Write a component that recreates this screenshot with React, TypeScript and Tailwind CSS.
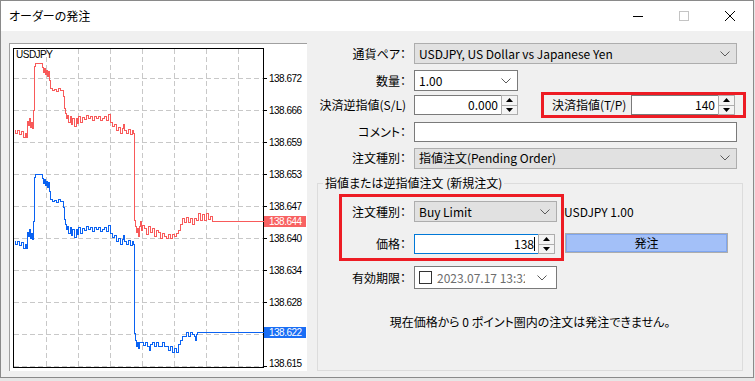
import React from 'react';

const redHead: [number, number][] = [
  [14, 130], [15, 133], [17, 130], [19, 134], [21, 131], [23, 137], [25, 133], [26, 137], [27, 121], [28, 125],
  [29, 118], [30, 127], [31, 122], [32, 128], [33, 110], [34, 66], [35, 63], [41, 63], [42, 67], [43, 72],
  [44, 68], [45, 74], [46, 70], [47, 76], [48, 71], [49, 80], [50, 88], [52, 90], [54, 89], [56, 91],
  [58, 88], [60, 90], [62, 90], [63, 96], [64, 108], [65, 113], [66, 118], [67, 115], [68, 122], [70, 116],
  [71, 124], [72, 118], [74, 126], [76, 118], [77, 123], [78, 116], [80, 122], [82, 117], [84, 119], [86, 115],
  [88, 118], [90, 116], [92, 120], [94, 116], [96, 118], [98, 116], [100, 120], [102, 118], [104, 116], [106, 120],
  [108, 114], [110, 122], [112, 126], [114, 124], [116, 130], [118, 127], [120, 133], [122, 128], [123, 124], [124, 130],
  [126, 133], [128, 129], [130, 134], [132, 130], [133, 133],
];

const redTail: [number, number][] = [
  [134, 220], [135, 226], [136, 232], [137, 228], [138, 236], [139, 226], [140, 221], [141, 230], [142, 225], [144, 228],
  [146, 234], [148, 226], [150, 232], [152, 228], [154, 236], [156, 230], [158, 232], [160, 238], [162, 233], [164, 236],
  [166, 238], [168, 234], [170, 238], [172, 234], [174, 236], [176, 233], [178, 230], [180, 224], [182, 218], [184, 222],
  [186, 217], [188, 222], [190, 218], [192, 224], [194, 218], [196, 220], [198, 213], [200, 220], [202, 214], [204, 220],
  [206, 213], [208, 219], [210, 216], [212, 221], [263, 221],
];

const blueTail: [number, number][] = [
  [134, 333], [135, 340], [136, 346], [137, 342], [138, 348], [139, 342], [141, 342], [143, 345], [145, 342], [147, 346],
  [149, 350], [150, 344], [152, 342], [154, 346], [156, 342], [158, 346], [160, 346], [162, 342], [164, 346], [166, 346],
  [168, 350], [170, 346], [172, 352], [174, 348], [176, 352], [178, 344], [180, 340], [182, 336], [185, 336], [186, 332],
  [188, 336], [190, 332], [192, 334], [194, 336], [195, 340], [196, 334], [197, 332], [263, 332],
];

const redLine = [...redHead, ...redTail];
const blueLine = [...redHead.map(([x, y]) => [x, y + 111] as [number, number]), ...blueTail];

// 138.622 sits under the blue bid tag, so it has no plain label
const levels = [
  [78, '138.672'], [110, '138.666'], [142, '138.659'], [174, '138.653'], [206, '138.647'],
  [238, '138.640'], [270, '138.634'], [302, '138.628'], [334, ''], [366, '138.615'],
] as const;
const vLines = [46, 78, 110, 142, 174, 206, 238];

function stepPath(pts: [number, number][]) {
  let d = `M${pts[0][0] + 0.5} ${pts[0][1] + 0.5}`;
  for (let i = 1; i < pts.length; i++) {
    d += ` H${pts[i][0] + 0.5} V${pts[i][1] + 0.5}`;
  }
  return d;
}

const axisFont = { fontSize: 10, fontFamily: "'Liberation Sans', sans-serif", letterSpacing: -0.5 };

function Chart() {
  return (
    <div className="w-[298px] h-[328px] bg-white border-t border-l border-[#a0a0a0] shrink-0">
      <svg width={297} height={327} className="block" shapeRendering="crispEdges">
        <g transform="translate(-10,-44)">
          {levels.map(([y]) => (
            <line key={y} x1={14} x2={263} y1={y + 0.5} y2={y + 0.5} stroke="#c8c8c8" strokeDasharray="5 3" />
          ))}
          {vLines.map((x) => (
            <line key={x} x1={x + 0.5} x2={x + 0.5} y1={49} y2={367} stroke="#c8c8c8" strokeDasharray="5 3" />
          ))}
          <rect x={13.5} y={48.5} width={250} height={319} fill="none" stroke="#000" />
          {levels.map(([y, t], i) => (
            <g key={y}>
              <line x1={263} x2={267} y1={y + 0.5} y2={y + 0.5} stroke="#000" />
              {t && (
                <text x={269} y={i === levels.length - 1 ? 367 : y + 4} {...axisFont} fill="#000" shapeRendering="auto">
                  {t}
                </text>
              )}
            </g>
          ))}
          <text x={16} y={58} {...axisFont} fill="#000">USDJPY</text>
          <path d={stepPath(redLine)} fill="none" stroke="#f85a5a" />
          <path d={stepPath(blueLine)} fill="none" stroke="#0a62f2" />
          <rect x={264} y={216} width={42} height={11} fill="#f86262" />
          <text x={269} y={225} {...axisFont} fill="#fff">138.644</text>
          <rect x={264} y={327} width={42} height={11} fill="#1a6ef5" />
          <text x={269} y={336} {...axisFont} fill="#fff">138.622</text>
        </g>
      </svg>
    </div>
  );
}

function Chevron() {
  return (
    <svg width="10" height="6" viewBox="0 0 10 6" className="shrink-0">
      <path d="M0.5 0.5 L5 5 L9.5 0.5" fill="none" stroke="#5a5a5a" strokeWidth="1" />
    </svg>
  );
}

function Combo({ text, width, gray = true }: { text: string; width: string; gray?: boolean }) {
  return (
    <div
      className={`${width} h-[21px] ml-[8px] flex items-center justify-between pl-[4px] pr-[6px] border ${
        gray ? 'bg-[#e1e1e1] border-[#adadad]' : 'bg-white border-[#7a7a7a]'
      }`}
    >
      <span className="whitespace-nowrap">{text}</span>
      <Chevron />
    </div>
  );
}

function Spinner() {
  return (
    <div className="w-[17px] h-full -ml-px border border-[#adadad] bg-[#f4f4f4] flex flex-col">
      <div className="flex-1 flex items-center justify-center border-b border-[#adadad]">
        <svg width="7" height="4" viewBox="0 0 7 4"><polygon points="3.5,0 7,4 0,4" fill="#000" /></svg>
      </div>
      <div className="flex-1 flex items-center justify-center">
        <svg width="7" height="4" viewBox="0 0 7 4"><polygon points="0,0 7,0 3.5,4" fill="#000" /></svg>
      </div>
    </div>
  );
}

function SpinBox({ value, inputW, focused = false, caret = false }: { value: string; inputW: string; focused?: boolean; caret?: boolean }) {
  return (
    <div className="flex h-[20px]">
      <div
        className={`${inputW} h-full bg-white border flex items-center justify-end pr-[3px] ${
          focused ? 'border-[#0078d7]' : 'border-[#7a7a7a]'
        }`}
      >
        <span>{value}</span>
        {caret && <span className="w-px h-[14px] bg-black" />}
      </div>
      <Spinner />
    </div>
  );
}

function Label({ text, width }: { text: string; width: string }) {
  return <div className={`${width} text-right whitespace-nowrap shrink-0`}>{text}</div>;
}

export default function App() {
  return (
    <div className="w-[755px] h-[381px] bg-[#e6e6e6] overflow-hidden text-[12px] leading-[16px] text-black font-['Noto_Sans_CJK_JP',sans-serif] [font-feature-settings:'palt']">
      <div className="w-[754px] h-[378px] border border-[#8a8a8a] bg-[#f0f0f0] flex flex-col">
        <div className="h-[30px] bg-white flex items-center shrink-0">
          <span className="pl-[8px]">オーダーの発注</span>
          <div className="ml-auto flex">
            <div className="w-[46px] h-[30px] flex items-center justify-center">
              <svg width="10" height="1"><rect width="10" height="1" fill="#000" /></svg>
            </div>
            <div className="w-[46px] h-[30px] flex items-center justify-center">
              <svg width="10" height="10"><rect x="0.5" y="0.5" width="9" height="9" fill="none" stroke="#c4c4c4" /></svg>
            </div>
            <div className="w-[46px] h-[30px] flex items-center justify-center">
              <svg width="10" height="10"><path d="M0 0 L10 10 M10 0 L0 10" stroke="#000" strokeWidth="1" /></svg>
            </div>
          </div>
        </div>

        <div className="flex flex-1 pl-[8px] pt-[12px]">
          <Chart />

          <div className="ml-[10px] w-[429px] flex flex-col">
            <div className="flex items-center h-[21px]">
              <Label text="通貨ペア：" width="w-[89px]" />
              <Combo text="USDJPY, US Dollar vs Japanese Yen" width="w-[323px]" />
            </div>
            <div className="flex items-center h-[21px] mt-[6px]">
              <Label text="数量：" width="w-[89px]" />
              <Combo text="1.00" width="w-[104px]" gray={false} />
            </div>
            <div className="flex items-center h-[26px] mt-[1px]">
              <Label text="決済逆指値(S/L)" width="w-[89px]" />
              <div className="ml-[8px]">
                <SpinBox value="0.000" inputW="w-[88px]" />
              </div>
              <div className="ml-[23px] w-[205px] h-[26px] border-[3px] border-[#ed1c24] flex items-center justify-between pl-[8px] pr-[8px]">
                <span className="whitespace-nowrap">決済指値(T/P)</span>
                <SpinBox value="140" inputW="w-[88px]" />
              </div>
            </div>
            <div className="flex items-center h-[20px] mt-[4px]">
              <Label text="コメント：" width="w-[89px]" />
              <div className="ml-[8px] w-[323px] h-[20px] bg-white border border-[#7a7a7a]" />
            </div>
            <div className="flex items-center h-[20px] mt-[6px]">
              <Label text="注文種別：" width="w-[89px]" />
              <Combo text="指値注文(Pending Order)" width="w-[323px]" />
            </div>

            <fieldset className="mt-[7px] w-[426px] border border-[#dcdcdc] p-0 m-0 min-w-0">
              <legend className="ml-[5px] px-[2px] leading-[16px]">指値または逆指値注文 (新規注文)</legend>
              <div className="flex mt-[3px]">
                <div className="ml-[21px] w-[225px] border-[3px] border-[#ed1c24] pt-[4px] pb-[4px] flex flex-col">
                  <div className="flex items-center h-[21px]">
                    <Label text="注文種別：" width="w-[64px]" />
                    <Combo text="Buy Limit" width="w-[143px]" />
                  </div>
                  <div className="flex items-center h-[20px] mt-[12px]">
                    <Label text="価格：" width="w-[64px]" />
                    <div className="ml-[8px]">
                      <SpinBox value="138" inputW="w-[125px]" focused caret />
                    </div>
                  </div>
                </div>
                <div className="flex flex-col pt-[7px]">
                  <div className="h-[21px] flex items-center whitespace-nowrap">USDJPY 1.00</div>
                  <div className="mt-[11px] ml-px w-[163px] h-[20px] border border-[#adadad] bg-[#a3c0f8] shadow-[inset_0_0_0_1px_#7fa6f0] flex items-center justify-center">
                    発注
                  </div>
                </div>
              </div>
              <div className="flex items-center h-[23px] mt-[5px]">
                <Label text="有効期限：" width="w-[88px]" />
                <div className="ml-[8px] w-[143px] h-[23px] bg-white border border-[#7a7a7a] flex items-center pl-[4px] pr-[9px]">
                  <div className="w-[13px] h-[13px] border border-[#333] bg-white shrink-0" />
                  <div className="ml-[5px] w-[88px] overflow-hidden whitespace-nowrap text-[#6d6d6d]">2023.07.17 13:32</div>
                  <div className="ml-auto">
                    <Chevron />
                  </div>
                </div>
              </div>
              <div className="mt-[25px] mb-[40px] text-center whitespace-nowrap">
                現在価格から 0 ポイント圏内の注文は発注できません。
              </div>
            </fieldset>
          </div>
        </div>
      </div>
    </div>
  );
}
